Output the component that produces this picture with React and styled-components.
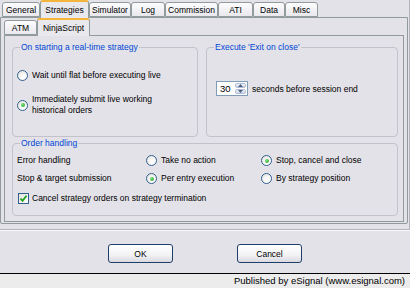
import React from 'react';
import styled, { createGlobalStyle } from 'styled-components';

const GlobalStyle = createGlobalStyle`
    html, body {
        margin: 0;
        padding: 0;
        background: #e3e2e8;
    }
    body {
        font-family: "Liberation Sans", Arial, sans-serif;
        font-size: 8.5px;
        color: #000;
    }
`

const mainTabs = [
    { label: 'General', w: 38 },
    { label: 'Strategies', w: 49, active: true },
    { label: 'Simulator', w: 42 },
    { label: 'Log', w: 34 },
    { label: 'Commission', w: 53 },
    { label: 'ATI', w: 35 },
    { label: 'Data', w: 32 },
    { label: 'Misc', w: 33 },
];

const subTabs = [
    { label: 'ATM', w: 33 },
    { label: 'NinjaScript', w: 53, active: true },
];

const Radio = ({ checked }) => (
    <StRadio>{checked && <StRadioDot />}</StRadio>
);

const Check = () => (
    <StCheck>
        <svg width="9" height="9" viewBox="0 0 9 9">
            <path d="M1.5 4.5 L3.5 6.8 L7.5 1.8" fill="none" stroke="#21a121" strokeWidth="1.8" />
        </svg>
    </StCheck>
);

const Spinner = ({ value }) => (
    <StSpin>
        <StSpinValue>{value}</StSpinValue>
        <StSpinButtons>
            <StSpinBtn>
                <svg width="5" height="3" viewBox="0 0 5 3"><path d="M0 3 L2.5 0 L5 3 Z" fill="#4d6185" /></svg>
            </StSpinBtn>
            <StSpinBtn>
                <svg width="5" height="3" viewBox="0 0 5 3"><path d="M0 0 L2.5 3 L5 0 Z" fill="#4d6185" /></svg>
            </StSpinBtn>
        </StSpinButtons>
    </StSpin>
);

const App = () => {
    return (
        <StWindow>
            <GlobalStyle />
            <StTopFrame>
                <StTabStrip>
                    {mainTabs.map((t) => (
                        <StTab key={t.label} $w={t.w} $active={t.active}>{t.label}</StTab>
                    ))}
                </StTabStrip>
                <StOuterPanel>
                    <StSubTabStrip>
                        {subTabs.map((t) => (
                            <StTab key={t.label} $w={t.w} $active={t.active}>{t.label}</StTab>
                        ))}
                    </StSubTabStrip>
                    <StInnerPanel>
                        <StTopRow>
                            <StGroup $w={186}>
                                <StLegend>On starting a real-time strategy</StLegend>
                                <StStartList>
                                    <StOption>
                                        <Radio />
                                        <span>Wait until flat before executing live</span>
                                    </StOption>
                                    <StOption>
                                        <Radio checked />
                                        <span>Immediately submit live working<br />historical orders</span>
                                    </StOption>
                                </StStartList>
                            </StGroup>
                            <StGroup $w={192}>
                                <StLegend>Execute 'Exit on close'</StLegend>
                                <StExitRow>
                                    <Spinner value="30" />
                                    <span>seconds before session end</span>
                                </StExitRow>
                            </StGroup>
                        </StTopRow>
                        <StOrderGroup>
                            <StLegend>Order handling</StLegend>
                            <StOrderGrid>
                                <span>Error handling</span>
                                <StOption><Radio /><span>Take no action</span></StOption>
                                <StOption><Radio checked /><span>Stop, cancel and close</span></StOption>
                                <span>Stop &amp; target submission</span>
                                <StOption><Radio checked /><span>Per entry execution</span></StOption>
                                <StOption><Radio /><span>By strategy position</span></StOption>
                            </StOrderGrid>
                            <StCheckRow>
                                <Check />
                                <span>Cancel strategy orders on strategy termination</span>
                            </StCheckRow>
                        </StOrderGroup>
                    </StInnerPanel>
                </StOuterPanel>
            </StTopFrame>
            <StButtonRow>
                <StButton>OK</StButton>
                <StButton>Cancel</StButton>
            </StButtonRow>
            <StStatusBar>Published by eSignal (www.esignal.com)</StStatusBar>
        </StWindow>
    );
};

const StWindow = styled.div`
    width: 410px;
    height: 288px;
    overflow: hidden;
    display: flex;
    flex-direction: column;
    background: #e3e2e8;
`

const StTopFrame = styled.div`
    width: 409px;
    padding-bottom: 5px;
    border-bottom: 1px solid #b4b3bb;
    border-right: 1px solid #b4b3bb;
    box-shadow: 0 1px 0 #fbfbfd;
`

const StTabStrip = styled.div`
    display: flex;
    align-items: flex-end;
    height: 17px;
    padding-left: 2px;
`

const StSubTabStrip = styled(StTabStrip)`
    padding-left: 0;
`

const StTab = styled.div`
    box-sizing: border-box;
    position: relative;
    z-index: ${(p) => (p.$active ? 2 : 1)};
    width: ${(p) => p.$w}px;
    height: ${(p) => (p.$active ? 18 : 15)}px;
    margin-bottom: ${(p) => (p.$active ? -1 : 0)}px;
    display: flex;
    align-items: center;
    justify-content: center;
    padding-top: ${(p) => (p.$active ? 0 : 1)}px;
    border: 1px solid #919b9c;
    border-bottom: ${(p) => (p.$active ? 'none' : '1px solid #919b9c')};
    border-top: ${(p) => (p.$active ? '2px solid #f5b43c' : '1px solid #919b9c')};
    border-radius: 3px 3px 0 0;
    background: ${(p) => (p.$active ? '#e9e8ed' : 'linear-gradient(#fdfdfe, #e8e8ee)')};
    white-space: nowrap;
`

const StOuterPanel = styled.div`
    width: 408px;
    box-sizing: border-box;
    border: 1px solid #919b9c;
    border-radius: 0 0 2px 2px;
    padding: 0 3px 1px 3px;
    background: #e3e2e8;
`

const StInnerPanel = styled.div`
    box-sizing: border-box;
    height: 187px;
    border: 1px solid #919b9c;
    padding: 6px 5px 5px 7px;
    display: flex;
    flex-direction: column;
    gap: 1px;
`

const StTopRow = styled.div`
    display: flex;
    gap: 8px;
`

const StGroup = styled.fieldset`
    box-sizing: border-box;
    width: ${(p) => p.$w}px;
    height: 95px;
    margin: 0;
    padding: 0 4px 4px 4px;
    border: 1px solid #c3c2ca;
    border-radius: 4px;
    min-width: 0;
`

const StOrderGroup = styled(StGroup)`
    width: 386px;
    height: 78px;
`

const StLegend = styled.legend`
    color: #0046d5;
    line-height: 10px;
    margin-left: 3px;
    padding: 0 1px;
`

const StStartList = styled.div`
    display: flex;
    flex-direction: column;
    gap: 13px;
    padding-top: 18px;
`

const StOption = styled.div`
    display: flex;
    align-items: center;
    gap: 4px;
    line-height: 11px;
    white-space: nowrap;
`

const StRadio = styled.span`
    box-sizing: border-box;
    flex: none;
    width: 11px;
    height: 11px;
    border: 1px solid #31608f;
    border-radius: 50%;
    background: radial-gradient(circle at 65% 70%, #ffffff 20%, #e4e3dc 90%);
    display: flex;
    align-items: center;
    justify-content: center;
`

const StRadioDot = styled.span`
    width: 4px;
    height: 4px;
    border-radius: 50%;
    background: radial-gradient(circle at 35% 35%, #7fe07f, #1c9a1c);
`

const StExitRow = styled.div`
    display: flex;
    align-items: center;
    gap: 4px;
    padding: 29px 0 0 5px;
    white-space: nowrap;
`

const StSpin = styled.div`
    box-sizing: border-box;
    display: flex;
    width: 32px;
    height: 15px;
    border: 1px solid #7f9db9;
    background: #fff;
`

const StSpinValue = styled.span`
    flex: 1;
    padding-left: 3px;
    font-size: 9.5px;
    line-height: 13px;
`

const StSpinButtons = styled.div`
    display: flex;
    flex-direction: column;
    gap: 1px;
    padding: 1px;
`

const StSpinBtn = styled.span`
    box-sizing: border-box;
    flex: 1;
    width: 11px;
    border: 1px solid #b3bdd4;
    border-radius: 2px;
    background: linear-gradient(#f5f7fd, #cfd6e8);
    display: flex;
    align-items: center;
    justify-content: center;
`

const StOrderGrid = styled.div`
    display: grid;
    grid-template-columns: 129px 115px 1fr;
    row-gap: 7px;
    align-items: center;
    padding-top: 7px;
    line-height: 11px;
`

const StCheckRow = styled.div`
    display: flex;
    align-items: center;
    gap: 3px;
    margin-top: 9px;
    padding-left: 1px;
    line-height: 11px;
    white-space: nowrap;
`

const StCheck = styled.span`
    box-sizing: border-box;
    width: 11px;
    height: 11px;
    border: 1px solid #31608f;
    background: linear-gradient(135deg, #e4e3dc, #ffffff);
    display: flex;
    align-items: center;
    justify-content: center;
`

const StButtonRow = styled.div`
    flex: 1;
    display: flex;
    justify-content: center;
    align-items: flex-start;
    gap: 64px;
    padding: 14px 0 0 0;
`

const StButton = styled.button`
    box-sizing: border-box;
    width: 65px;
    height: 19px;
    padding: 0;
    border: 1px solid #1f3f6b;
    border-radius: 3px;
    background: linear-gradient(#ffffff 0%, #f2f2f5 60%, #d9d9e0 100%);
    font-family: "Liberation Sans", Arial, sans-serif;
    font-size: 8.5px;
    color: #000;
`

const StStatusBar = styled.div`
    height: 14px;
    border-top: 1px solid #000;
    background: #ececec;
    text-align: right;
    padding-right: 5px;
    font-size: 9.5px;
    line-height: 14px;
`

export default App;
